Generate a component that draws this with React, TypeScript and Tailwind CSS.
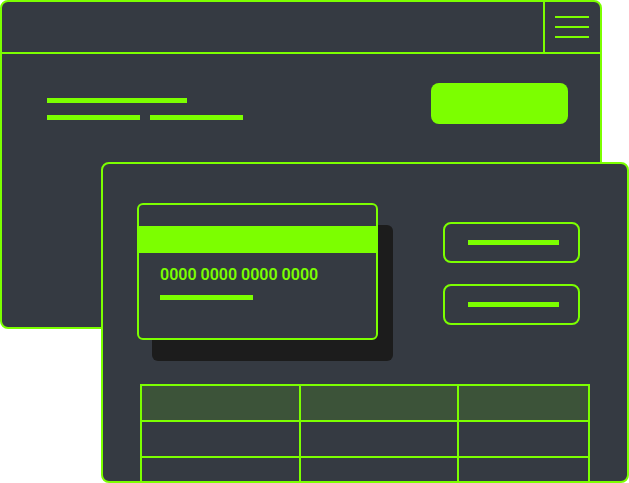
const GREEN = "bg-[#7cff00]";

function BackWindow() {
  return (
    <div className="absolute left-0 top-0 w-[602px] h-[329px] rounded-lg border-2 border-[#7cff00] bg-[#353a42] overflow-hidden">
      {/* header */}
      <div className="flex h-[52px] border-b-2 border-[#7cff00]">
        <div className="flex-1" />
        <div className="w-[57px] border-l-2 border-[#7cff00] flex flex-col justify-center gap-[8px] pl-[10px]">
          <div className={`h-[2px] w-[34px] ${GREEN}`} />
          <div className={`h-[2px] w-[34px] ${GREEN}`} />
          <div className={`h-[2px] w-[34px] ${GREEN}`} />
        </div>
      </div>
      {/* body */}
      <div className="flex justify-between items-start pl-[45px] pr-[32px] pt-[29px]">
        <div className="mt-[15px] flex flex-col gap-[12px]">
          <div className={`h-[5px] w-[140px] ${GREEN}`} />
          <div className="flex gap-[10px]">
            <div className={`h-[5px] w-[93px] ${GREEN}`} />
            <div className={`h-[5px] w-[93px] ${GREEN}`} />
          </div>
        </div>
        <div className={`w-[137px] h-[41px] rounded-lg ${GREEN}`} />
      </div>
    </div>
  );
}

function CreditCard() {
  return (
    <div className="relative w-[241px] h-[137px] shrink-0">
      <div className="absolute left-[15px] top-[22px] w-[241px] h-[136px] rounded-md bg-[#1c1c1c]" />
      <div className="relative h-full rounded-md border-2 border-[#7cff00] bg-[#353a42]">
        <div className={`mt-[21px] h-[27px] ${GREEN}`} />
        <div className="pl-[21px] pt-[13px]">
          <p className="text-[16px] leading-[18px] font-semibold text-[#7cff00] [font-family:Roboto,'Liberation_Sans',sans-serif]">
            0000 0000 0000 0000
          </p>
          <div className={`mt-[11px] h-[5px] w-[93px] ${GREEN}`} />
        </div>
      </div>
    </div>
  );
}

function OutlineButton() {
  return (
    <div className="w-[137px] h-[41px] rounded-lg border-2 border-[#7cff00] flex items-center justify-center">
      <div className={`ml-[4px] h-[5px] w-[91px] ${GREEN}`} />
    </div>
  );
}

function Table() {
  const rows = [0, 1, 2];
  return (
    <div className={`mt-[44px] ml-[3px] w-[450px] p-[2px] grid grid-cols-[157px_156px_129px] gap-[2px] ${GREEN}`}>
      {rows.map((r) =>
        [0, 1, 2].map((c) => (
          <div
            key={`${r}-${c}`}
            className={r === 0 ? "h-[34px] bg-[#3c5339]" : "h-[34px] bg-[#353a42]"}
          />
        ))
      )}
    </div>
  );
}

function FrontWindow() {
  return (
    <div className="absolute left-[101px] top-[162px] w-[528px] h-[321px] rounded-lg border-2 border-[#7cff00] bg-[#353a42] overflow-hidden">
      <div className="pl-[34px] pt-[39px]">
        <div className="flex items-start">
          <CreditCard />
          <div className="ml-[65px] mt-[19px] flex flex-col gap-[21px]">
            <OutlineButton />
            <OutlineButton />
          </div>
        </div>
        <Table />
      </div>
    </div>
  );
}

export default function App() {
  return (
    <div className="relative w-[629px] h-[483px] bg-white overflow-hidden">
      <BackWindow />
      <FrontWindow />
    </div>
  );
}
